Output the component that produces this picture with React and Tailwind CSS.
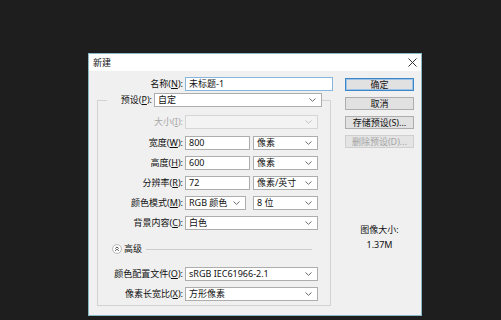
import React from "react";

function Chevron({ light }) {
  return (
    <svg width="7" height="4" viewBox="0 0 7 4" className="shrink-0">
      <polyline
        points="0.5,0.5 3.5,3.3 6.5,0.5"
        fill="none"
        stroke={light ? "#c4c4c4" : "#6a6a6a"}
        strokeWidth="1"
      />
    </svg>
  );
}

function Select({ value, w, disabled }) {
  return (
    <div
      className={`${w} h-[14px] flex items-center justify-between pl-[3px] pr-[5px] border ${
        disabled ? "border-[#d6d6d6] bg-[#f3f3f3]" : "border-[#adadad] bg-white"
      }`}
    >
      <span className="leading-[12px] whitespace-nowrap">{value}</span>
      <Chevron light={disabled} />
    </div>
  );
}

function Input({ value, w, focus }) {
  return (
    <div
      className={`${w} h-[14px] flex items-center pl-[3px] bg-white border ${
        focus ? "border-[#86b6e0]" : "border-[#adadad]"
      }`}
    >
      <span className="leading-[12px] whitespace-nowrap">{value}</span>
    </div>
  );
}

function Label({ text, k, w, disabled }) {
  return (
    <span className={`${w} text-right whitespace-nowrap leading-[14px] ${disabled ? "text-[#a8a8a8]" : ""}`}>
      {text}(<u>{k}</u>):
    </span>
  );
}

function Row({ label, k, disabled, children, className = "" }) {
  return (
    <div className={`flex items-center h-[14px] ${className}`}>
      <Label text={label} k={k} w="w-[85px]" disabled={disabled} />
      <div className="ml-[2px] flex items-center">{children}</div>
    </div>
  );
}

function Btn({ text, primary, disabled }) {
  return (
    <div
      className={`w-[69px] h-[13px] flex items-center justify-center leading-[11px] whitespace-nowrap border ${
        primary
          ? "border-[#3d86c8] shadow-[inset_0_0_0_1px_#9cc3e6] bg-[#e1e1e1]"
          : disabled
          ? "border-[#cfcfcf] bg-[#e4e4e4] text-[#a5a5a5]"
          : "border-[#adadad] bg-[#e1e1e1]"
      }`}
    >
      {text}
    </div>
  );
}

export default function App() {
  return (
    <div className="min-h-[320px] bg-[#1e1e1e] pt-[53px] pl-[88px] font-['Noto_Sans','Noto_Sans_CJK_SC',sans-serif] text-[9px] text-[#111]">
      <div className="w-[334px] h-[263px] bg-[#f0f0f0] border border-[#88b9c6] flex flex-col">
        <div className="h-[17px] bg-white flex items-center justify-between pl-[4px] pr-[4px]">
          <span className="leading-[12px]">新建</span>
          <svg width="9" height="9" viewBox="0 0 9 9">
            <path d="M0.5 0.5 L8.5 8.5 M8.5 0.5 L0.5 8.5" stroke="#333" strokeWidth="1" />
          </svg>
        </div>

        <div className="flex">
          <div className="pl-[8px] w-[244px]">
            <div className="flex items-center mt-[6px] h-[14px]">
              <Label text="名称" k="N" w="w-[86px]" />
              <div className="ml-[2px]">
                <Input value="未标题-1" w="w-[148px]" focus />
              </div>
            </div>

            <fieldset className="mt-[2px] w-[234px] border border-[#d3d3d3] pb-[4px]">
              <legend className="ml-[9px] flex items-center">
                <Label text="预设" k="P" w="w-[45px]" />
                <div className="ml-[2px]">
                  <Select value="自定" w="w-[168px]" />
                </div>
              </legend>

              <Row label="大小" k="I" disabled className="mt-[8px]">
                <Select value="" w="w-[133px]" disabled />
              </Row>
              <div className="flex flex-col gap-[6px] mt-[7px]">
                <Row label="宽度" k="W">
                  <Input value="800" w="w-[65px]" />
                  <div className="ml-[3px]">
                    <Select value="像素" w="w-[65px]" />
                  </div>
                </Row>
                <Row label="高度" k="H">
                  <Input value="600" w="w-[65px]" />
                  <div className="ml-[3px]">
                    <Select value="像素" w="w-[65px]" />
                  </div>
                </Row>
                <Row label="分辨率" k="R">
                  <Input value="72" w="w-[65px]" />
                  <div className="ml-[3px]">
                    <Select value="像素/英寸" w="w-[65px]" />
                  </div>
                </Row>
                <Row label="颜色模式" k="M">
                  <Select value="RGB 颜色" w="w-[61px]" />
                  <div className="ml-[7px]">
                    <Select value="8 位" w="w-[65px]" />
                  </div>
                </Row>
                <Row label="背景内容" k="C">
                  <Select value="白色" w="w-[133px]" />
                </Row>
              </div>

              <div className="flex items-center h-[10px] mt-[14px] ml-[14px] mr-[18px]">
                <svg width="10" height="10" viewBox="0 0 10 10" className="shrink-0">
                  <circle cx="5" cy="5" r="4.4" fill="#fff" stroke="#a8a8a8" strokeWidth="0.8" />
                  <polyline points="3.2,4.6 5,3 6.8,4.6" fill="none" stroke="#444" strokeWidth="0.9" />
                  <polyline points="3.2,6.8 5,5.2 6.8,6.8" fill="none" stroke="#444" strokeWidth="0.9" />
                </svg>
                <span className="ml-[2px] leading-[10px]">高级</span>
                <div className="ml-[4px] flex-1 h-px bg-[#cdcdcd]" />
              </div>

              <div className="flex flex-col gap-[6px] mt-[13px]">
                <Row label="颜色配置文件" k="O">
                  <Select value="sRGB IEC61966-2.1" w="w-[133px]" />
                </Row>
                <Row label="像素长宽比" k="X">
                  <Select value="方形像素" w="w-[133px]" />
                </Row>
              </div>
            </fieldset>
          </div>

          <div className="ml-[12px] flex flex-col items-center w-[69px]">
            <div className="mt-[7px] flex flex-col gap-[6px]">
              <Btn text="确定" primary />
              <Btn text="取消" />
              <Btn text="存储预设(S)..." />
              <Btn text="删除预设(D)..." disabled />
            </div>
            <div className="mt-[76px] leading-[12px]">图像大小:</div>
            <div className="mt-[3px] leading-[12px]">1.37M</div>
          </div>
        </div>
      </div>
    </div>
  );
}
